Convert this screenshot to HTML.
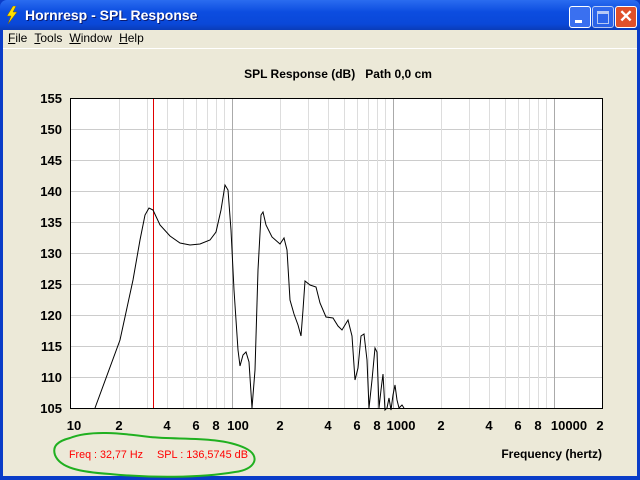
<html><body style="margin:0;width:640px;height:480px;overflow:hidden;background:#0a3cc8;font-family:'Liberation Sans',sans-serif">
<div style="position:absolute;left:0;top:0;width:640px;height:30px;background:linear-gradient(#2a6cf0,#0c4de0 40%,#0a48d8 80%,#0a3cb8);border-radius:7px 7px 0 0"></div>
<svg style="position:absolute;left:5px;top:6px" width="14" height="18"><path d="M8 0 L2 10 L6 10 L3 18 L12 6 L8 6 L11 0Z" fill="#ffe000" stroke="#806000" stroke-width="0.5"/></svg>
<div style="position:absolute;left:25px;top:7px;color:#fff;font-weight:bold;font-size:14px;text-shadow:1px 1px #0a1a70">Hornresp - SPL Response</div>
<div style="position:absolute;left:569px;top:6px;width:20px;height:20px;border:1px solid #fff;border-radius:3px;background:#3a70f0"><div style="position:absolute;left:5px;top:13px;width:7px;height:3px;background:#fff"></div></div>
<div style="position:absolute;left:592px;top:6px;width:20px;height:20px;border:1px solid #fff;border-radius:3px;background:#3a70f0;opacity:.7"><div style="position:absolute;left:4px;top:4px;width:10px;height:9px;border:1px solid #fff;border-top-width:3px"></div></div>
<div style="position:absolute;left:615px;top:6px;width:20px;height:20px;border:1px solid #fff;border-radius:3px;background:#e0502a;color:#fff;font-weight:bold;font-size:17px;text-align:center;line-height:20px">✕</div>
<div style="position:absolute;left:3px;top:30px;width:634px;height:446px;background:#ece9d8"></div>
<div style="position:absolute;left:8px;top:31px;font-size:12px;word-spacing:0">
<span style="margin-right:7px"><u>F</u>ile</span><span style="margin-right:7px"><u>T</u>ools</span><span style="margin-right:7px"><u>W</u>indow</span><span><u>H</u>elp</span></div>
<div style="position:absolute;left:3px;top:48px;width:634px;height:1px;background:#fff"></div>
<svg style="position:absolute;left:0;top:0" width="640" height="480" font-family="Liberation Sans" font-weight="bold" font-size="12">
<text x="338" y="78" text-anchor="middle">SPL Response (dB)&#160;&#160;&#160;Path 0,0 cm</text>
<rect x="70.5" y="98.5" width="532" height="310" fill="#fff" stroke="#000"/>
<g stroke="#ccc">
<line x1="71" y1="129.5" x2="602" y2="129.5"/><line x1="71" y1="160.5" x2="602" y2="160.5"/><line x1="71" y1="191.5" x2="602" y2="191.5"/><line x1="71" y1="222.5" x2="602" y2="222.5"/><line x1="71" y1="253.5" x2="602" y2="253.5"/><line x1="71" y1="284.5" x2="602" y2="284.5"/><line x1="71" y1="315.5" x2="602" y2="315.5"/><line x1="71" y1="346.5" x2="602" y2="346.5"/><line x1="71" y1="377.5" x2="602" y2="377.5"/>
</g>
<g stroke="#ddd" id="v">
<line x1="119.5" y1="99" x2="119.5" y2="408"/><line x1="147.5" y1="99" x2="147.5" y2="408"/><line x1="167.5" y1="99" x2="167.5" y2="408"/><line x1="183.5" y1="99" x2="183.5" y2="408"/><line x1="196.5" y1="99" x2="196.5" y2="408"/><line x1="207.5" y1="99" x2="207.5" y2="408"/><line x1="216.5" y1="99" x2="216.5" y2="408"/><line x1="224.5" y1="99" x2="224.5" y2="408"/>
</g>
<use href="#v" x="161"/><use href="#v" x="322"/>
<line x1="232.5" y1="99" x2="232.5" y2="408" stroke="#aaa"/><line x1="393.5" y1="99" x2="393.5" y2="408" stroke="#aaa"/><line x1="554.5" y1="99" x2="554.5" y2="408" stroke="#aaa"/>
<line x1="153.5" y1="99" x2="153.5" y2="408" stroke="#e00000"/>
<path fill="none" stroke="#000" d="M95 408 L120 340 L133 280 L140 240 L145 215 L149 208 L153 210 L160 225 L170 236 L180 243 L190 245 L200 244 L210 240 L216 232 L221 210 L225 185 L228 190 L231 230 L234 290 L238 350 L240 366 L243 355 L246 352 L249 362 L252 408 L255 370 L258 270 L261 215 L263 212 L266 225 L272 237 L280 244 L284 238 L287 250 L290 300 L294 314 L298 325 L301 336 L303 310 L305 281 L310 285 L316 287 L320 303 L326 317 L333 318 L338 326 L342 330 L348 320 L352 336 L355 380 L358 368 L361 336 L364 334 L367 360 L369 408 L372 380 L375 348 L377 352 L379 408 L381 390 L383 374 L385 410 L387 408 L389 398 L391 410 L393 395 L395 385 L397 400 L399 408 L402 405 L404 408"/>
<g text-anchor="end" font-size="13"><text x="62" y="103">155</text><text x="62" y="134">150</text><text x="62" y="165">145</text><text x="62" y="196">140</text><text x="62" y="227">135</text><text x="62" y="258">130</text><text x="62" y="289">125</text><text x="62" y="320">120</text><text x="62" y="351">115</text><text x="62" y="382">110</text><text x="62" y="413">105</text></g>
<g text-anchor="middle" font-size="13">
<text x="74" y="430">10</text><text x="119" y="430">2</text><text x="167" y="430">4</text><text x="196" y="430">6</text><text x="216" y="430">8</text><text x="238" y="430">100</text><text x="280" y="430">2</text><text x="328" y="430">4</text><text x="357" y="430">6</text><text x="377" y="430">8</text><text x="401" y="430">1000</text><text x="441" y="430">2</text><text x="489" y="430">4</text><text x="518" y="430">6</text><text x="538" y="430">8</text><text x="569" y="430">10000</text><text x="600" y="430">2</text></g>
<text x="602" y="458" text-anchor="end" font-size="12">Frequency (hertz)</text>
<g fill="#f00" font-weight="normal" font-size="11"><text x="69" y="458" textLength="74" lengthAdjust="spacingAndGlyphs">Freq : 32,77 Hz</text><text x="157" y="458" textLength="91" lengthAdjust="spacingAndGlyphs">SPL : 136,5745 dB</text></g>
<path fill="none" stroke="#20b020" stroke-width="2" d="M70 438 C90 430 120 433 150 437 C180 440 220 436 245 448 C262 456 255 470 235 472 C200 478 150 478 110 474 C80 472 60 468 55 455 C52 446 58 441 70 438Z"/>
</svg>
</body></html>
